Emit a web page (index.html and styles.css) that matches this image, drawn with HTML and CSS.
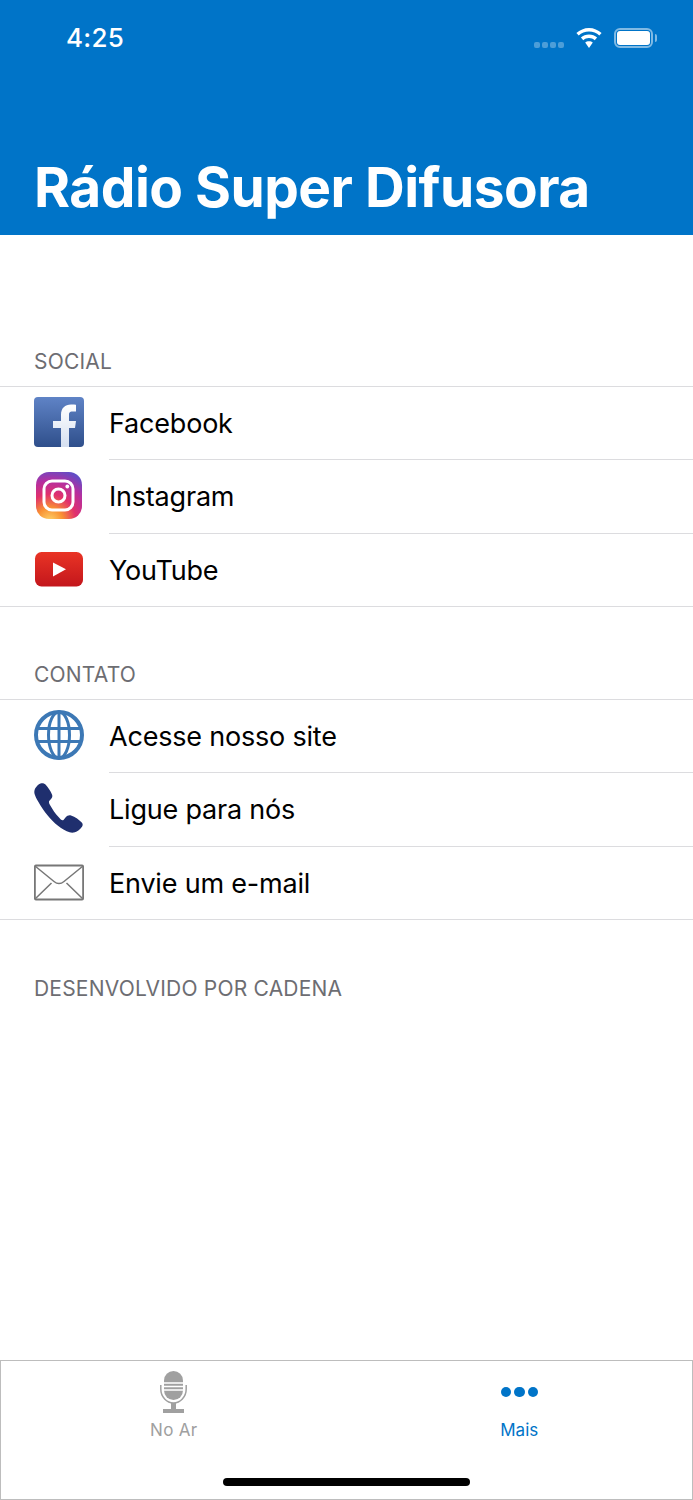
FILE: index.html
```html
<!DOCTYPE html>
<html>
<head>
<title>Rádio Super Difusora</title>
<meta charset="utf-8" />
<link rel="stylesheet" href="styles.css">
</head>
<body>
<div class="page">
  <header class="top">
    <div class="status">
      <span class="time">4:25</span>
      <div class="status-icons">
        <span class="signal"><i></i><i></i><i></i><i></i></span>
        <svg class="wifi" width="26" height="20" viewBox="1 0 26 20">
          <path d="M14 3.600c4 0 7.600 1.500 10.300 4l2.300-2.500C23.200 2 18.800 0 14 0S4.800 2 1.400 5.100l2.300 2.500c2.700-2.500 6.300-4 10.300-4z" fill="#fff"/>
          <path d="M14 10c2.200 0 4.200 .8 5.700 2.200l2.400-2.600C20 7.700 17.100 6.500 14 6.500s-6 1.200-8.100 3.100l2.400 2.600C9.800 10.800 11.800 10 14 10z" fill="#fff"/>
          <path d="M14 13.200c-1.500 0-2.800 .5-3.800 1.400L14 20l3.800-5.400c-1-.9-2.300-1.400-3.800-1.400z" fill="#fff"/>
        </svg>
        <span class="battery"><span class="battery-fill"></span></span>
      </div>
    </div>
    <h1 class="title">Rádio Super Difusora</h1>
  </header>

  <main class="content">
    <section class="group group-first">
      <h2 class="group-label">SOCIAL</h2>
      <ul class="rows">
        <li class="row">
          <svg class="icon" viewBox="0 0 50 50">
            <defs><linearGradient id="fb" x1="0" y1="0" x2="0" y2="1"><stop offset="0" stop-color="#5f83c6"/><stop offset="1" stop-color="#2f4f8b"/></linearGradient>
            <linearGradient id="fbf" x1="0" y1="0" x2="0" y2="1"><stop offset="0" stop-color="#fff"/><stop offset="1" stop-color="#d5dff0"/></linearGradient></defs>
            <rect x="0" y="0" width="50" height="50" rx="4" fill="url(#fb)"/>
            <path d="M27 50V31h-8v-7h8v-6c0-7 4-10.500 10-10.500 2.500 0 4.500 .2 5 .3v6.700h-3.500c-3 0-3.500 1.500-3.500 3.500v6h7l-1 7h-6V50z" fill="url(#fbf)"/>
          </svg>
          <span class="row-text">Facebook</span>
        </li>
        <li class="row">
          <svg class="icon" viewBox="0 0 50 50">
            <defs>
              <radialGradient id="ig" cx="0.3" cy="1.05" r="1.150">
                <stop offset="0" stop-color="#fdd56b"/><stop offset=".25" stop-color="#f99133"/><stop offset=".5" stop-color="#e1306c"/><stop offset=".75" stop-color="#b52fa0"/><stop offset="1" stop-color="#5b4fc8"/>
              </radialGradient>
            </defs>
            <rect x="2" y="2" width="46" height="47" rx="13" fill="url(#ig)"/>
            <rect x="10" y="11" width="29" height="29" rx="8" fill="none" stroke="#fff" stroke-width="3"/>
            <circle cx="24.500" cy="25.500" r="6.500" fill="none" stroke="#fff" stroke-width="3"/>
            <circle cx="33.300" cy="16.500" r="1.900" fill="#fff"/>
          </svg>
          <span class="row-text">Instagram</span>
        </li>
        <li class="row">
          <svg class="icon" viewBox="0 0 50 50">
            <defs><linearGradient id="yt" x1="0" y1="0" x2="0" y2="1"><stop offset="0" stop-color="#e93425"/><stop offset="1" stop-color="#c3161c"/></linearGradient></defs>
            <rect x="1" y="8" width="48" height="34.500" rx="6.500" fill="url(#yt)"/>
            <path d="M19 18.500v14L32 25.200z" fill="#fff"/>
          </svg>
          <span class="row-text">YouTube</span>
        </li>
      </ul>
    </section>

    <section class="group">
      <h2 class="group-label">CONTATO</h2>
      <ul class="rows">
        <li class="row">
          <svg class="icon" viewBox="0 0 50 50" fill="none" stroke="#3c78b5" stroke-width="3">
            <circle cx="25" cy="25" r="23" stroke-width="4"/>
            <ellipse cx="25" cy="25" rx="10.500" ry="23"/>
            <path d="M25 2v46M3.500 18.500h43M3.500 31.500h43"/>
          </svg>
          <span class="row-text">Acesse nosso site</span>
        </li>
        <li class="row">
          <svg class="icon" viewBox="0 0 50 50">
            <path d="M6.500 .5C8 0 10 .2 11.500 1.500C14 4 16.500 8 18 11.500C18.800 13.500 18 15 16.800 16.300L15.200 18C14.700 19 15 20.500 16 22C18.500 26.500 21.500 31 25 34.500C26.500 36.500 28 37.800 29.500 37L31.500 34.500C33 32.700 35 32 37 32.500C41 33.800 45.500 37 48 39.800C49 41 48.800 42.500 48 43.800C46 46.500 43 49 40 49.500C36 50.300 31.500 48 27 45C19 39.500 12 31.500 6.500 22.500C3 16.500 .3 12 .3 9C.3 5.500 3.500 1.700 6.500 .5Z" fill="#1f2f6e"/>
          </svg>
          <span class="row-text">Ligue para nós</span>
        </li>
        <li class="row">
          <svg class="icon" viewBox="0 0 50 50" fill="none" stroke="#777" stroke-width="1.500">
            <rect x=".9" y="8.500" width="48.200" height="34" rx="1" stroke-width="1.800"/>
            <path d="M1 9l19 15.500c3 2.500 7 2.500 10 0L49 9M1 42l16.500-16M49 42L32.500 26"/>
          </svg>
          <span class="row-text">Envie um e-mail</span>
        </li>
      </ul>
    </section>

    <p class="credit">DESENVOLVIDO POR CADENA</p>
  </main>

  <nav class="tabs">
    <div class="tab-items">
      <div class="tab">
        <div class="tab-slot">
          <svg width="27" height="42" viewBox="0 0 27 42">
            <rect x="4" y="0" width="19" height="29" rx="9.500" fill="#a0a0a0"/>
            <path d="M4 12h19M4 15.500h19M4 19h19" stroke="#fff" stroke-width="1.300"/>
            <path d="M.8 14v4c0 8 6 14 12.700 14s12.700-6 12.700-14v-4" fill="none" stroke="#a0a0a0" stroke-width="1.500"/>
            <path d="M11 32h5v6h-5zM3 38h21v4H3z" fill="#a0a0a0"/>
          </svg>
        </div>
        <span class="tab-label">No Ar</span>
      </div>
      <div class="tab tab-active">
        <div class="tab-slot">
          <span class="dots"><i></i><i></i><i></i></span>
        </div>
        <span class="tab-label">Mais</span>
      </div>
    </div>
    <div class="home-bar"></div>
  </nav>
</div>
</body>
</html>
```

FILE: styles.css
```css
* {
  box-sizing: border-box;
}

body {
  margin: 0;
  font-family: 'Inter', 'Liberation Sans', sans-serif;
  background: #fff;
  color: #000;
}

h1, h2, p, ul {
  margin: 0;
  padding: 0;
}

ul {
  list-style: none;
}

.page {
  width: 693px;
  height: 1500px;
  display: flex;
  flex-direction: column;
  overflow: hidden;
}

/* blue header */
.top {
  height: 235px;
  background: #0074c8;
  color: #fff;
  padding: 0 40px 0 34px;
}

.status {
  height: 75px;
  display: flex;
  justify-content: space-between;
  align-items: center;
  padding-left: 32px;
}

.time {
  font-size: 26px;
  font-weight: 500;
  letter-spacing: .3px;
}

.status-icons {
  display: flex;
  align-items: center;
  gap: 12px;
}

.signal {
  display: flex;
  gap: 2px;
  margin-top: 15px;
}

.signal i {
  width: 6px;
  height: 6px;
  border-radius: 2px;
  background: rgba(255, 255, 255, .3);
}

.battery {
  width: 39px;
  height: 20px;
  border: 2px solid rgba(255, 255, 255, .5);
  border-radius: 6px;
  padding: 1px;
  position: relative;
}

.battery::after {
  content: '';
  position: absolute;
  right: -6px;
  top: 4px;
  width: 2px;
  height: 8px;
  border-radius: 0 2px 2px 0;
  background: rgba(255, 255, 255, .5);
}

.battery-fill {
  display: block;
  height: 100%;
  background: #fff;
  border-radius: 3px;
}

.title {
  margin-top: 80px;
  font-size: 55px;
  line-height: 64px;
  font-weight: 700;
  letter-spacing: -.52px;
  white-space: nowrap;
}

/* settings list */
.content {
  flex: 1;
}

.group {
  padding-top: 48px;
}

.group-first {
  padding-top: 107px;
}

.group-label, .credit {
  font-size: 21px;
  font-weight: 400;
  line-height: 40px;
  height: 44px;
  padding-left: 34px;
  letter-spacing: .2px;
  color: #6d6d72;
}

.rows {
  height: 221px;
  border-top: 1px solid #dcdcdf;
  border-bottom: 1px solid #dcdcdf;
}

.row {
  height: 73.330px;
  display: flex;
  align-items: center;
  padding: 0 0 3px 34px;
  gap: 25px;
  position: relative;
}

.row + .row::before {
  content: '';
  position: absolute;
  left: 109px;
  right: 0;
  top: -1px;
  height: 1px;
  background: #dcdcdf;
}

.icon {
  width: 50px;
  height: 50px;
  flex: none;
}

.row-text {
  padding-top: 3px;
  font-size: 27px;
  letter-spacing: -.2px;
}

.credit {
  margin-top: 49px;
}

/* tab bar */
.tabs {
  height: 140px;
  border: 1px solid #bdbdbd;
  display: flex;
  flex-direction: column;
  background: #fff;
}

.tab-items {
  display: flex;
  padding-top: 10px;
  flex: 1;
}

.tab {
  flex: 1;
  display: flex;
  flex-direction: column;
  align-items: center;
  gap: 7px;
}

.tab-slot {
  height: 42px;
  display: flex;
  align-items: center;
}

.tab-slot svg {
  display: block;
}

.tab-label {
  font-size: 17px;
  line-height: 20px;
  color: #a0a0a0;
  letter-spacing: .3px;
}

.tab-active .tab-label {
  color: #0074c8;
  letter-spacing: 0;
}

.dots {
  display: flex;
  gap: 3px;
}

.dots i {
  width: 10.500px;
  height: 10.500px;
  border-radius: 50%;
  background: #0074c8;
}

.home-bar {
  width: 247px;
  height: 8px;
  border-radius: 4px;
  background: #000;
  margin: 0 auto 13px;
}
```
